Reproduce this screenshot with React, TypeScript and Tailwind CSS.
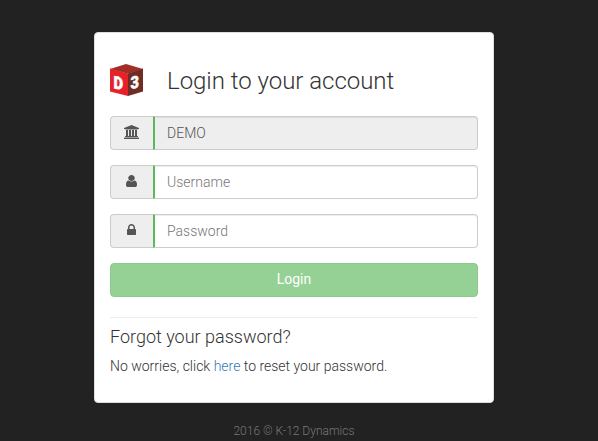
import type { ReactNode } from "react";

function BankIcon() {
  return (
    <svg width="15" height="14" viewBox="0 0 1920 1792" fill="currentColor">
      <path d="M960 0l960 384v128h-128q0 26-20.5 45t-48.5 19h-1526q-28 0-48.5-19t-20.5-45h-128v-128zm-704 640h256v768h128v-768h256v768h128v-768h256v768h128v-768h256v768h59q28 0 48.5 19t20.5 45v64h-1664v-64q0-26 20.5-45t48.5-19h59v-768zm1595 960q28 0 48.5 19t20.5 45v128h-1920v-128q0-26 20.5-45t48.5-19h1782z" />
    </svg>
  );
}

function UserIcon() {
  return (
    <svg width="11" height="14" viewBox="0 0 1280 1792" preserveAspectRatio="none" fill="currentColor">
      <path d="M1280 1399q0 109-62.5 187t-150.5 78h-854q-88 0-150.5-78t-62.5-187q0-85 8.5-160.5t31.5-152 58.5-131 94-89 134.5-34.5q131 128 313 128t313-128q76 0 134.5 34.5t94 89 58.5 131 31.5 152 8.5 160.5zm-256-887q0 159-112.5 271.5t-271.5 112.5-271.5-112.5-112.5-271.5 112.5-271.5 271.5-112.5 271.5 112.5 112.5 271.5z" />
    </svg>
  );
}

function LockIcon() {
  return (
    <svg width="9" height="14" viewBox="0 0 1152 1792" fill="currentColor">
      <path d="M320 768h512v-192q0-106-75-181t-181-75-181 75-75 181v192zm832 96v576q0 40-28 68t-68 28h-960q-40 0-68-28t-28-68v-576q0-40 28-68t68-28h32v-192q0-184 132-316t316-132 316 132 132 316v192h32q40 0 68 28t28 68z" />
    </svg>
  );
}

function Logo() {
  return (
    <svg width="33" height="32" viewBox="0 0 33 32" className="font-[Roboto,sans-serif] font-black">
      <path d="M0 5L16 0L33 5L18 9.8Z" fill="#a12f25" />
      <path d="M0 4.6L18 9.6V32L0 27.5Z" fill="#e62229" />
      <path d="M18 9.6L33 4.6V27.5L18 32Z" fill="#6f2d25" />
      <g fill="#fff" stroke="#fff" strokeWidth="0.5">
        <text transform="matrix(0.85 0.16 0 1 3.5 24.3)" fontSize="17.5">D</text>
        <text transform="matrix(0.86 -0.16 0 1 20.6 25)" fontSize="17">3</text>
      </g>
    </svg>
  );
}

function Field({ icon, label, value }: { icon: ReactNode; label: string; value?: string }) {
  return (
    <div className="mb-[15px] flex h-[34px]">
      <span className="flex w-[43px] items-center justify-center rounded-l border border-r-0 border-[#ccc] bg-[#eee] pr-px pb-[2px] text-[#555]">
        {icon}
      </span>
      <input
        aria-label={label}
        placeholder={label}
        defaultValue={value}
        disabled={value !== undefined}
        className="min-w-0 flex-1 rounded-r border border-l-2 border-[#ccc] border-l-[#5cb85c] bg-white px-3 text-sm font-light text-[#555] shadow-[inset_0_1px_1px_rgba(0,0,0,0.075)] outline-none placeholder:text-[#777] disabled:bg-[#eee]"
      />
    </div>
  );
}

export default function App() {
  return (
    <div className="flex h-[441px] flex-col items-center overflow-hidden bg-[#222] pt-8 pr-[10px] font-[Roboto,sans-serif] text-sm font-light text-[#333]">
      <main className="h-[371px] w-[400px] rounded border border-[#ddd] bg-white px-[15px] pt-[31px]">
        <div className="mb-5 flex h-8 items-center">
          <Logo />
          <h1 className="ml-6 pt-[2px] text-2xl leading-8 tracking-[-0.02px] whitespace-nowrap">Login to your account</h1>
        </div>
        <Field icon={<BankIcon />} label="School" value="DEMO" />
        <Field icon={<UserIcon />} label="Username" />
        <Field icon={<LockIcon />} label="Password" />
        <button className="block h-[34px] w-full rounded border border-[#8bcb8b] bg-[#95d195] pb-[2px] text-sm font-normal text-white">
          Login
        </button>
        <hr className="mt-5 mb-[9px] border-[#eee]" />
        <h2 className="text-lg leading-5">Forgot your password?</h2>
        <p className="mt-[9px] leading-5">
          No worries, click <a href="#reset" className="text-[#337ab7]">here</a> to reset your password.
        </p>
      </main>
      <footer className="mt-5 text-xs leading-4 text-[#777]">2016 © K-12 Dynamics</footer>
    </div>
  );
}
